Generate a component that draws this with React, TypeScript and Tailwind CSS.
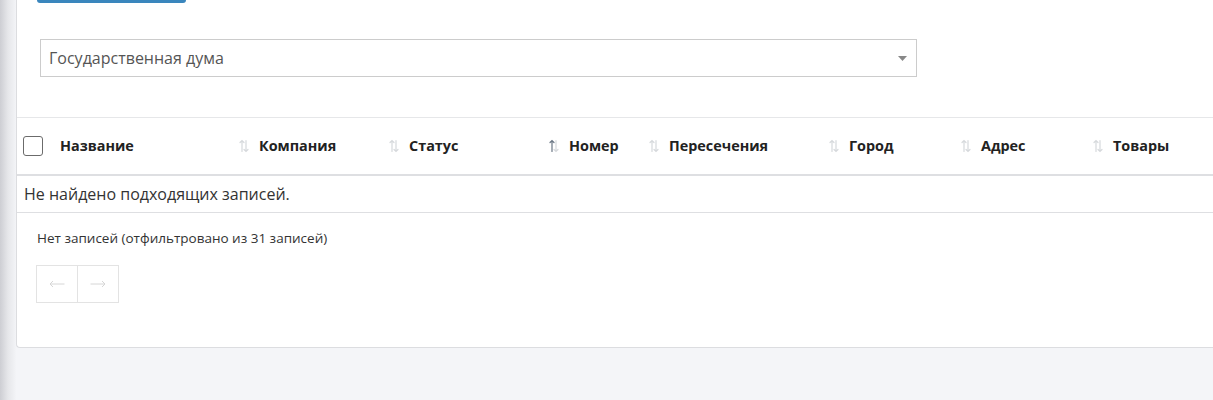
import React from 'react';

type Col = { title: string; width: string; active?: boolean };

const columns: Col[] = [
  { title: 'Компания', width: 'w-[150px]' },
  { title: 'Статус', width: 'w-[160px]' },
  { title: 'Номер', width: 'w-[100px]', active: true },
  { title: 'Пересечения', width: 'w-[180px]' },
  { title: 'Город', width: 'w-[132px]' },
  { title: 'Адрес', width: 'w-[132px]' },
  { title: 'Товары', width: 'flex-1' },
];

function SortIcon({ active }: { active?: boolean }) {
  return (
    <svg width="10" height="14" viewBox="0 0 10 14" className="shrink-0">
      <g fill="none" strokeWidth="1.2" strokeLinecap="round">
        <path d="M3 12.5V1.5M1 3.5l2-2 2 2" stroke={active ? '#6b7785' : '#d6d9dc'} />
        <path d="M7 1.5v11M5 10.5l2 2 2-2" stroke="#d6d9dc" />
      </g>
    </svg>
  );
}

function PageArrow({ dir }: { dir: 'left' | 'right' }) {
  return (
    <svg width="16" height="8" viewBox="0 0 16 8">
      <g fill="none" stroke="#d6d6d6" strokeWidth="1">
        {dir === 'left' ? (
          <path d="M15.5 4H1M4 1L1 4l3 3" />
        ) : (
          <path d="M0.5 4H15M12 1l3 3-3 3" />
        )}
      </g>
    </svg>
  );
}

export default function App() {
  return (
    <div className="flex h-[400px] w-full bg-[#f4f5f8] font-['Open_Sans',sans-serif] text-[#333]">
      {/* sidebar shadow */}
      <div className="w-4 shrink-0 bg-gradient-to-r from-[#cdced3] via-[#e6e7ea] to-[#f3f4f7]" />

      <div className="flex-1 min-w-0">
        <div className="h-[348px] bg-white border-l border-b border-[#dcdde0] rounded-bl-[4px] flex flex-col">
          {/* clipped button above */}
          <div className="ml-[20px] h-[3px] w-[149px] rounded-b-[3px] bg-[#3a86bd]" />

          {/* filter select */}
          <div className="mt-[36px] ml-[23px] w-[877px] h-[38px] border border-[#cccccc] flex items-center justify-between pl-[8px] pr-[9px]">
            <span className="text-[16px] text-[#555]">Государственная дума</span>
            <svg width="9" height="5" viewBox="0 0 9 5">
              <path d="M0 0h9L4.5 5z" fill="#888" />
            </svg>
          </div>

          {/* table */}
          <div className="mt-[40px] border-t border-[#e6e7e9]">
            <div className="flex items-center h-[58px] border-b-2 border-[#dedfe2]">
              <div className="w-[35px] shrink-0 pl-[6px] flex items-center">
                <div className="w-[20px] h-[20px] border border-[#6b6b6b] rounded-[3px]" />
              </div>
              <div className="w-[180px] shrink-0 pl-2 text-[14.4px] font-bold text-[#222]">Название</div>
              {columns.map((c) => (
                <div key={c.title} className={`${c.width} shrink-0 flex items-center gap-[10px] pl-[7px] text-[14.4px] font-bold text-[#222]`}>
                  <SortIcon active={c.active} />
                  <span>{c.title}</span>
                </div>
              ))}
            </div>
            <div className="h-[37px] flex items-center pl-[7px] border-b border-[#dedfe2] text-[16px] text-[#333]">
              Не найдено подходящих записей.
            </div>
          </div>

          <div className="mt-[15px] pl-[20px] text-[13.5px] text-[#333]">Нет записей (отфильтровано из 31 записей)</div>

          <div className="mt-[17px] ml-[19px] flex">
            <div className="w-[42px] h-[38px] border border-[#e3e3e3] flex items-center justify-center">
              <PageArrow dir="left" />
            </div>
            <div className="w-[41px] h-[38px] border border-l-0 border-[#e3e3e3] flex items-center justify-center">
              <PageArrow dir="right" />
            </div>
          </div>
        </div>
      </div>
    </div>
  );
}
